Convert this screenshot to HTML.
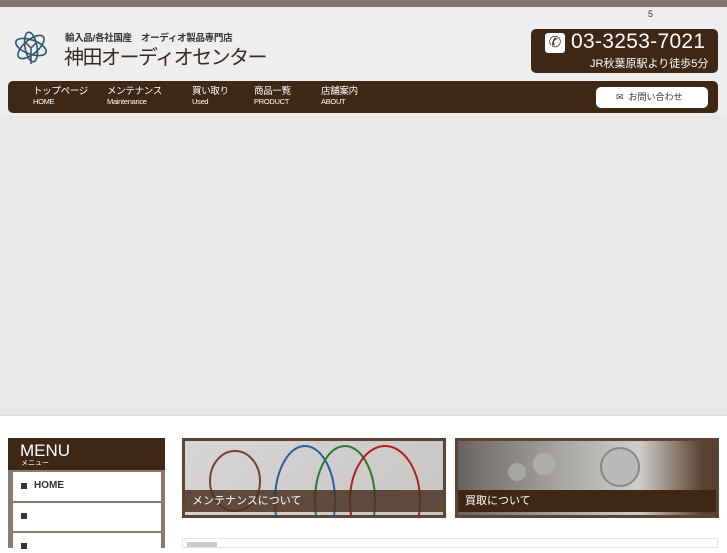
<!DOCTYPE html>
<html><head><meta charset="utf-8"><style>
*{margin:0;padding:0;box-sizing:border-box}
body{width:727px;height:545px;overflow:hidden;background:#fff;font-family:"Liberation Sans","Noto Sans CJK JP",sans-serif;position:relative}
.abs{position:absolute}
</style></head><body>
<div class="abs" style="left:0;top:0;width:727px;height:7px;background:#85766b"></div>
<div class="abs" style="left:0;top:7px;width:727px;height:108px;background:#eeeeee"></div>
<div class="abs" style="left:648px;top:9px;font-size:9px;color:#333">5</div>
<svg class="abs" style="left:12px;top:28px" width="38" height="40" viewBox="0 0 38 40">
<g fill="none" stroke="#2b5570" stroke-width="1.6">
<ellipse cx="19" cy="19" rx="16" ry="7" transform="rotate(20 19 19)"/>
<ellipse cx="19" cy="19" rx="16" ry="7" transform="rotate(-40 19 19)"/>
<ellipse cx="19" cy="19" rx="15" ry="6" transform="rotate(80 19 19)"/>
<path d="M19 20 L19 36 M13 14 L19 20 L25 14" stroke="#556"/>
</g></svg>
<div class="abs" style="left:65px;top:30px;font-size:9.5px;color:#333;font-weight:bold;letter-spacing:-0.3px">輸入品/各社国産　オーディオ製品専門店</div>
<div class="abs" style="left:64px;top:41px;font-size:20px;color:#3a2a1f;letter-spacing:-1.5px">神田オーディオセンター</div>
<div class="abs" style="left:531px;top:29px;width:187px;height:44px;background:#3f2716;border-radius:5px"></div>
<div class="abs" style="left:545px;top:33px;width:20px;height:20px;background:#fff;border-radius:3px;color:#3f2716;font-size:15px;text-align:center;line-height:20px">✆</div>
<div class="abs" style="left:571px;top:30px;font-size:21px;color:#fff;letter-spacing:0.3px">03-3253-7021</div>
<div class="abs" style="left:590px;top:55px;font-size:11px;color:#fff">JR秋葉原駅より徒歩5分</div>
<div class="abs" style="left:8px;top:81px;width:710px;height:32px;background:#3f2716;border-radius:5px"></div>
<div class="abs" style="left:33px;top:87px;color:#fff;font-size:9.5px;line-height:10px;letter-spacing:-0.3px">トップページ<br><span style="font-size:7.5px">HOME</span></div>
<div class="abs" style="left:107px;top:87px;color:#fff;font-size:9.5px;line-height:10px;letter-spacing:-0.3px">メンテナンス<br><span style="font-size:7.5px">Maintenance</span></div>
<div class="abs" style="left:192px;top:87px;color:#fff;font-size:9.5px;line-height:10px;letter-spacing:-0.3px">買い取り<br><span style="font-size:7.5px">Used</span></div>
<div class="abs" style="left:254px;top:87px;color:#fff;font-size:9.5px;line-height:10px;letter-spacing:-0.3px">商品一覧<br><span style="font-size:7.5px">PRODUCT</span></div>
<div class="abs" style="left:321px;top:87px;color:#fff;font-size:9.5px;line-height:10px;letter-spacing:-0.3px">店舗案内<br><span style="font-size:7.5px">ABOUT</span></div>
<div class="abs" style="left:596px;top:87px;width:112px;height:21px;background:#fff;border-radius:5px;font-size:9px;color:#333;line-height:21px;padding-left:20px">✉&nbsp; お問い合わせ</div>
<div class="abs" style="left:0;top:115px;width:727px;height:301px;background:#e8e8e8;border-bottom:1px solid #ddd"></div>
<div class="abs" style="left:8px;top:438px;width:157px;height:110px;background:#8a7b70"></div>
<div class="abs" style="left:8px;top:438px;width:157px;height:32px;background:#3f2716"></div>
<div class="abs" style="left:20px;top:442px;color:#fff;font-size:17px;line-height:17px">MENU</div>
<div class="abs" style="left:21px;top:458px;color:#fff;font-size:7px">メニュー</div>
<div class="abs" style="left:13px;top:472px;width:148px;height:29px;background:#fff"></div>
<div class="abs" style="left:13px;top:503px;width:148px;height:28px;background:#fff"></div>
<div class="abs" style="left:13px;top:533px;width:148px;height:20px;background:#fff"></div>
<div class="abs" style="left:21px;top:483px;width:6px;height:6px;background:#333"></div>
<div class="abs" style="left:34px;top:480px;font-size:10px;font-weight:bold;color:#333">HOME</div>
<div class="abs" style="left:21px;top:513px;width:6px;height:6px;background:#333"></div>
<div class="abs" style="left:21px;top:543px;width:6px;height:6px;background:#333"></div>
<div class="abs" style="left:182px;top:438px;width:264px;height:80px;background:#5c4434;padding:3px">
<div style="width:100%;height:100%;background:linear-gradient(135deg,#d8d6d4,#c8c6c4);position:relative;overflow:hidden">
<svg width="258" height="74" style="position:absolute;left:0;top:0"><g fill="none" stroke-width="2">
<ellipse cx="50" cy="40" rx="25" ry="30" stroke="#7a4030"/>
<ellipse cx="120" cy="60" rx="30" ry="55" stroke="#2a60a0"/>
<ellipse cx="160" cy="60" rx="30" ry="55" stroke="#2a7a30"/>
<ellipse cx="200" cy="60" rx="35" ry="55" stroke="#b02020"/></g></svg>
<div style="position:absolute;left:0;top:49px;width:100%;height:22px;background:rgba(75,50,35,.85);color:#fff;font-size:11px;line-height:22px;padding-left:7px">メンテナンスについて</div></div></div>
<div class="abs" style="left:455px;top:438px;width:264px;height:80px;background:#5c4434;padding:3px">
<div style="width:100%;height:100%;background:linear-gradient(90deg,#6a6460,#a8a6a2 40%,#d0cecb 70%,#5a4030 95%);position:relative;overflow:hidden">
<div style="position:absolute;left:142px;top:6px;width:40px;height:40px;border-radius:50%;background:#bcbab8;border:2px solid #888"></div>
<div style="position:absolute;left:75px;top:12px;width:22px;height:22px;border-radius:50%;background:#b0aeac"></div>
<div style="position:absolute;left:50px;top:22px;width:18px;height:18px;border-radius:50%;background:#a8a6a4"></div>
<div style="position:absolute;left:0;top:49px;width:100%;height:22px;background:#3f2716;color:#fff;font-size:11px;line-height:22px;padding-left:7px">買取について</div></div></div>
<div class="abs" style="left:182px;top:538px;width:536px;height:10px;border:1px solid #e4e4e4"></div>
<div class="abs" style="left:187px;top:542px;width:30px;height:5px;background:#ccc"></div>
</body></html>
